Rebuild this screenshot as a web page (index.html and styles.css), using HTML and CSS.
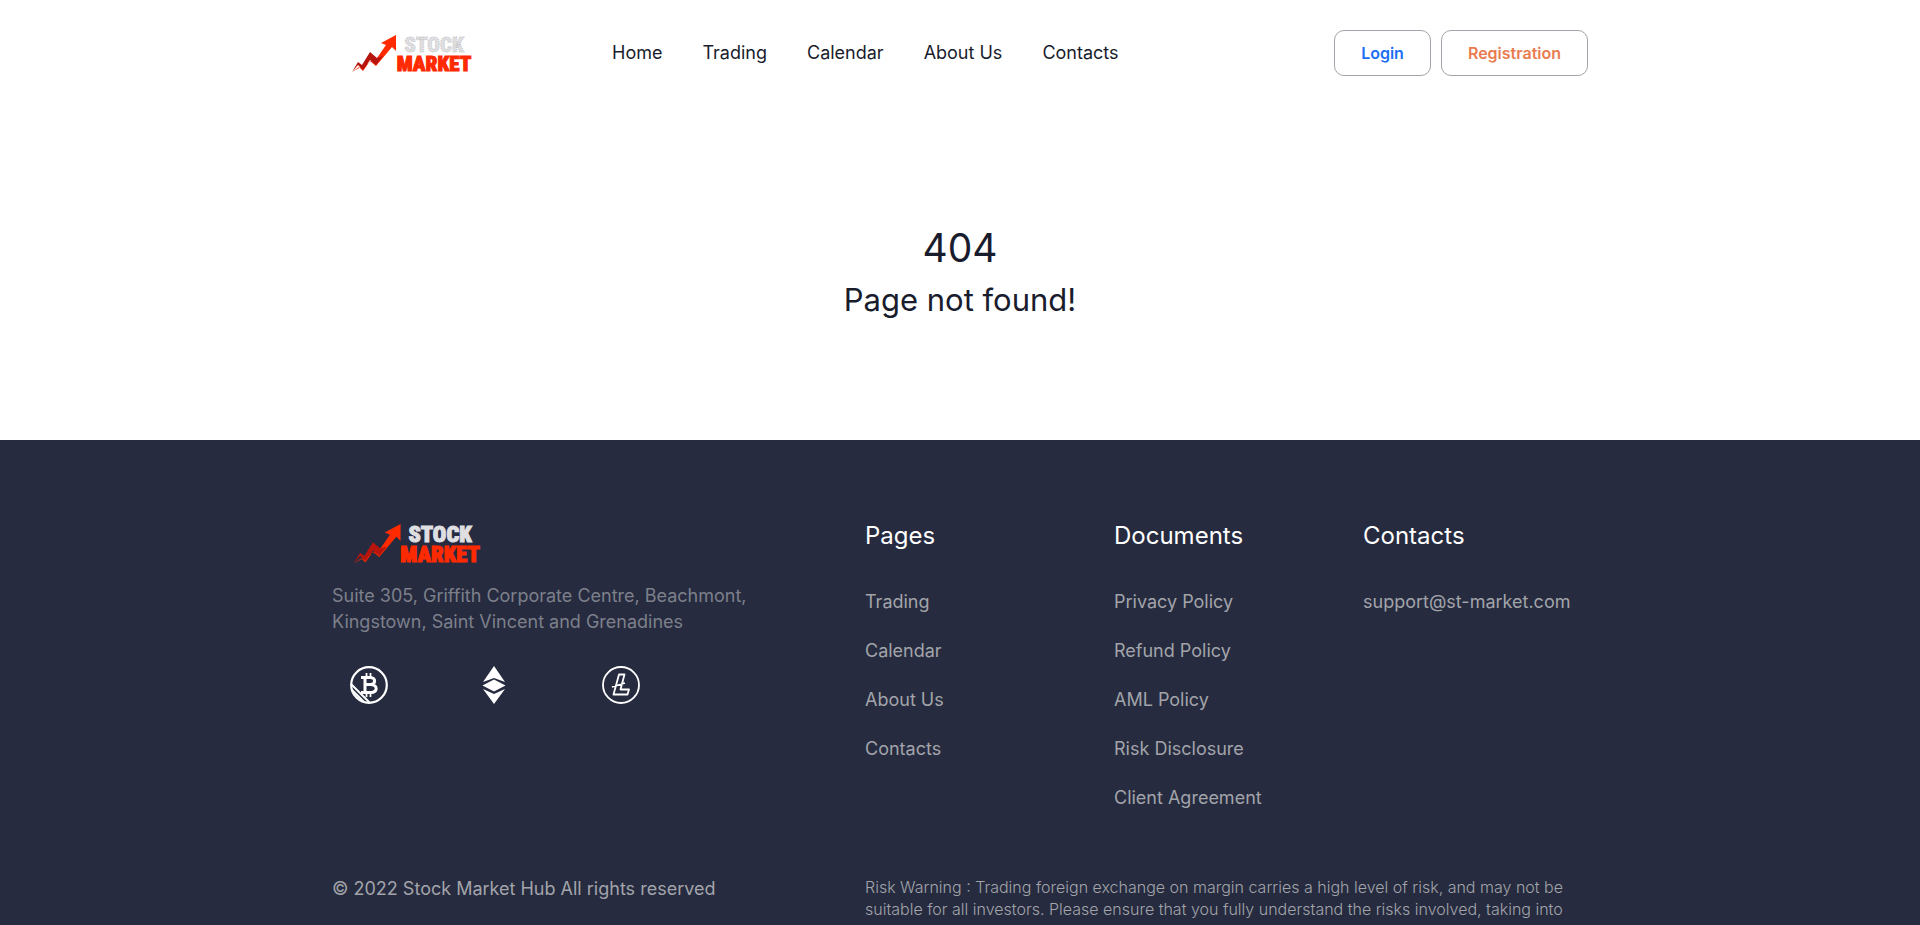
FILE: index.html
```html
<!DOCTYPE html>
<html lang="en">
<head>
    <meta charset="UTF-8">
    <meta name="viewport" content="width=device-width, initial-scale=1.0">
    <title>Stock Market Hub</title>
    <link rel="stylesheet" href="styles.css">
</head>
<body>
    <header class="header">
        <div class="container header-row">
            <a class="logo" href="#" aria-label="Stock Market">
                <svg width="140" height="60" viewBox="0 0 140 60">
                    <path fill="#ff2a00" d="M45 38 L54 25 L49 23 L64 15 L64 31 L60 27 L44 46 L38 41 L31 51 L27 47 L20 52 Z"/>
                    <path fill="#b5150c" d="M20 52 L26 42 L30 45 L38 32 L45 38 L51 36 L44 45 L38 40 L31 50 L26 45 Z"/>
                    <text class="logo-stock outlined" x="102" y="32">STOCK</text>
                    <text class="logo-market" x="102" y="51">MARKET</text>
                </svg>
            </a>
            <nav class="nav">
                <a href="#">Home</a>
                <a href="#">Trading</a>
                <a href="#">Calendar</a>
                <a href="#">About Us</a>
                <a href="#">Contacts</a>
            </nav>
            <div class="buttons">
                <button type="button" class="btn btn-login">Login</button>
                <button type="button" class="btn btn-registration">Registration</button>
            </div>
        </div>
    </header>

    <main class="not-found">
        <h1>404</h1>
        <h2>Page not found!</h2>
    </main>

    <footer class="footer">
        <div class="container">
            <div class="footer-row">
                <div class="footer-about">
                    <a class="logo" href="#" aria-label="Stock Market">
                        <svg width="150" height="64" viewBox="0 0 140 60">
                            <path fill="#ff2a00" d="M45 38 L54 25 L49 23 L64 15 L64 31 L60 27 L44 46 L38 41 L31 51 L27 47 L20 52 Z"/>
                            <path fill="#b5150c" d="M20 52 L26 42 L30 45 L38 32 L45 38 L51 36 L44 45 L38 40 L31 50 L26 45 Z"/>
                            <text class="logo-stock" x="101" y="32">STOCK</text>
                            <text class="logo-market" x="101" y="51">MARKET</text>
                        </svg>
                    </a>
                    <p class="address">Suite 305, Griffith Corporate Centre, Beachmont, Kingstown, Saint Vincent and Grenadines</p>
                    <div class="coins">
                        <svg width="38" height="38" viewBox="0 0 38 38" fill="none" stroke="#fff">
                            <circle cx="19" cy="19" r="17.8" stroke-width="2.2"/>
                            <path stroke-width="2" d="M1 18 L20 37 M2 24 L14 36"/>
                            <path stroke-width="1.8" d="M16.5 7v4 M20.5 7v4 M16.5 27v4 M20.5 27v4"/>
                            <path stroke-width="3" d="M11 11.5H20.5C26 11.5 26 18.5 20.5 18.5H16 M20.5 18.5C28 18.5 28 26.5 21 26.5H11 M15 11.5V26.5"/>
                        </svg>
                        <svg width="38" height="38" viewBox="0 0 38 38" fill="#fff">
                            <path d="M18 0 L29 16 L18 12 L7 16 Z"/>
                            <path d="M18 13.5 L29.5 19.5 L18 25.5 L6.5 19.5 Z"/>
                            <path d="M7 23 L18 28 L29 23 L18 38 Z"/>
                        </svg>
                        <svg width="38" height="38" viewBox="0 0 38 38" fill="none" stroke="#fff">
                            <circle cx="19" cy="19" r="18" stroke-width="1.8"/>
                            <path stroke-width="1.8" stroke-linejoin="round" d="M17 8.5H22.5L18.5 23.5H27L25.5 28.5H11.5L17 8.5Z M10 21L23 17"/>
                        </svg>
                    </div>
                </div>
                <div class="footer-column">
                    <h3>Pages</h3>
                    <ul>
                        <li><a href="#">Trading</a></li>
                        <li><a href="#">Calendar</a></li>
                        <li><a href="#">About Us</a></li>
                        <li><a href="#">Contacts</a></li>
                    </ul>
                </div>
                <div class="footer-column">
                    <h3>Documents</h3>
                    <ul>
                        <li><a href="#">Privacy Policy</a></li>
                        <li><a href="#">Refund Policy</a></li>
                        <li><a href="#">AML Policy</a></li>
                        <li><a href="#">Risk Disclosure</a></li>
                        <li><a href="#">Client Agreement</a></li>
                    </ul>
                </div>
                <div class="footer-column">
                    <h3>Contacts</h3>
                    <ul>
                        <li><a href="mailto:support@st-market.com">support@st-market.com</a></li>
                    </ul>
                </div>
            </div>
            <div class="footer-row footer-bottom">
                <p class="copyright">© 2022 Stock Market Hub All rights reserved</p>
                <p class="risk">Risk Warning : Trading foreign exchange on margin carries a high level of risk, and may not be suitable for all investors. Please ensure that you fully understand the risks involved, taking into</p>
            </div>
        </div>
    </footer>
</body>
</html>
```
FILE: styles.css
```css
* {
    box-sizing: border-box;
}
body {
    margin: 0;
    min-height: 100vh;
    display: flex;
    flex-direction: column;
    font-family: Inter, "Open Sans", sans-serif;
    font-size: 18px;
    color: #191c2c;
    background: #fff;
}
h1, h2, h3, p, ul {
    margin: 0;
    padding: 0;
    font-weight: 400;
}
ul {
    list-style: none;
}
a {
    color: inherit;
    text-decoration: none;
}
.container {
    width: 100%;
    max-width: 1280px;
    margin: 0 auto;
    padding: 0 12px;
}
.header {
    padding: 20px 0 18px;
}
.header-row {
    display: flex;
    align-items: center;
    min-height: 66px;
}
.header .logo {
    align-self: flex-start;
}
.logo svg {
    display: block;
}
.logo text {
    font-family: "Roboto Condensed", "Liberation Sans Narrow", "Open Sans", sans-serif;
    font-weight: 900;
    text-anchor: middle;
}
.logo-stock {
    font-size: 21px;
    fill: #dfdfe2;
    stroke: #dfdfe2;
}
.logo-stock.outlined {
    stroke: #c4c4c8;
    stroke-dasharray: 1 1;
}
.logo-market {
    font-size: 21px;
    fill: #ff2a00;
    stroke: #ff2a00;
}
.nav {
    display: flex;
    gap: 40px;
    margin-left: 140px;
    line-height: 26px;
}
.buttons {
    display: flex;
    gap: 10px;
    margin-left: auto;
}
.btn {
    height: 46px;
    padding: 0 26px;
    border: 1px solid #a3a4ab;
    border-radius: 10px;
    background: #fff;
    font-family: inherit;
    font-size: 16px;
    font-weight: 600;
    cursor: pointer;
}
.btn-login {
    color: #1b6ff5;
}
.btn-registration {
    color: #e97b50;
}
.not-found {
    padding: 120px 12px;
    text-align: center;
}
.not-found h1 {
    font-size: 39px;
    line-height: 48px;
    margin-bottom: 8px;
}
.not-found h2 {
    font-size: 31px;
    line-height: 40px;
}
.footer {
    flex: 1;
    padding-top: 68px;
    background: #262b3f;
    color: #a2a4aa;
}
.footer-row {
    display: grid;
    grid-template-columns: 509fr 225fr 225fr 225fr;
    column-gap: 24px;
}
.address {
    max-width: 440px;
    margin-top: 11px;
    line-height: 26px;
    color: #7d808b;
}
.coins {
    display: flex;
    gap: 88px;
    margin-top: 31px;
    padding-left: 18px;
}
.footer-column h3 {
    font-size: 24px;
    line-height: 28px;
    margin: 14px 0 39px;
    color: #fff;
}
.footer-column li {
    line-height: 25px;
    margin-bottom: 24px;
}
.footer-bottom {
    margin-top: 42px;
}
.copyright {
    line-height: 26px;
}
.risk {
    grid-column: 2 / -1;
    font-size: 16px;
    font-weight: 300;
    line-height: 22px;
}
```
